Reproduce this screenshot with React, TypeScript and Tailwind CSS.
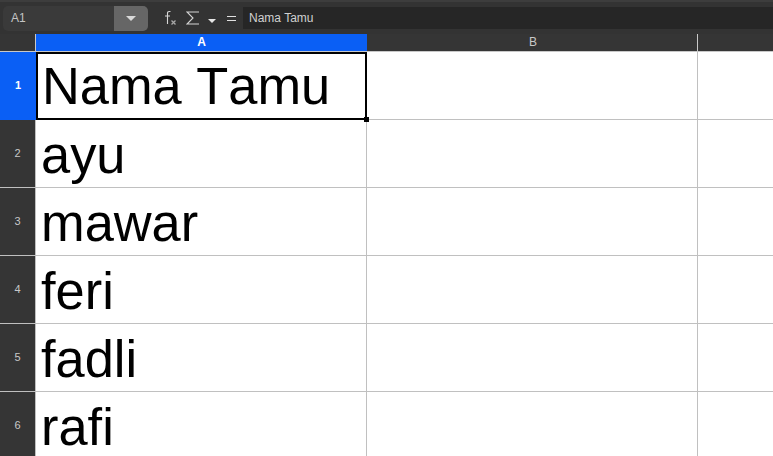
const rows = ['Nama Tamu', 'ayu', 'mawar', 'feri', 'fadli', 'rafi'];

function FormulaBar() {
  return (
    <div className="flex h-[34px] items-center border-t-2 border-[#3d3d3d] bg-[#333333] pl-[3px]">
      {/* name box */}
      <div className="flex h-[25px] w-[145px] overflow-hidden rounded-[5px] bg-[#3a3a3a]">
        <div className="flex flex-1 items-center pl-2 text-[12px] text-[#c4c4c4]">A1</div>
        <div className="flex w-[34px] items-center justify-center bg-[#666666]">
          <div className="h-0 w-0 border-x-[5px] border-t-[5px] border-x-transparent border-t-[#d9d9d9]" />
        </div>
      </div>
      {/* function icons */}
      <div className="ml-[15px] flex w-[80px] items-center text-[#d6d6d6]">
        <svg width="14" height="16" viewBox="0 0 14 16" fill="none" stroke="currentColor">
          <path d="M7.5 1.5H6.2C5 1.5 4.5 2.2 4.5 3.2V14M2 6H7" strokeWidth="1.1" />
          <path d="M8.5 10.5L12.5 14.5M12.5 10.5L8.5 14.5" strokeWidth="1.3" stroke="#a8a8a8" />
        </svg>
        <svg className="ml-[9px]" width="14" height="14" viewBox="0 0 14 14" fill="none" stroke="currentColor">
          <path d="M13 1H1L7 7L1 13H13" strokeWidth="1.1" />
        </svg>
        <div className="ml-[8px] mt-[5px] h-0 w-0 border-x-[4px] border-t-[4px] border-x-transparent border-t-[#e6e6e6]" />
        <div className="ml-[11px] flex w-[9px] flex-col gap-[3px]">
          <div className="h-px bg-[#e0e0e0]" />
          <div className="h-px bg-[#e0e0e0]" />
        </div>
      </div>
      {/* formula input */}
      <div className="flex h-[22px] flex-1 items-center bg-[#262626] pl-[6px] text-[12px] text-[#d0d0d0]">
        Nama Tamu
      </div>
    </div>
  );
}

function ColumnHeaders() {
  return (
    <div className="grid h-[18px] grid-cols-[36px_331px_331px_1fr] bg-[#353535] text-[12px] leading-[17px]">
      <div className="border-r border-b border-[#c8c8c8]" />
      <div className="border-b border-[#c8c8c8] bg-[#0a5ff5] text-center font-bold text-white">A</div>
      <div className="border-r border-b border-[#c8c8c8] pl-[2px] text-center text-[#c8c8c8]">B</div>
      <div className="border-b border-[#c8c8c8]" />
    </div>
  );
}

function SheetRow({ n, name }: { n: number; name: string }) {
  const selected = n === 1;
  return (
    <div className="grid h-[68px] grid-cols-[36px_331px_331px_1fr] grid-rows-[68px]">
      <div
        className={
          selected
            ? 'flex items-center justify-center bg-[#0a5ff5] pb-[2px] text-[11px] font-bold text-white'
            : 'flex items-center justify-center border-r border-b border-[#c0c0c0] bg-[#353535] text-[11px] text-[#c8c8c8]'
        }
      >
        {n}
      </div>
      <div
        className={
          selected
            ? 'relative border-2 border-black pl-[4px] text-[52.4px] leading-[64px] text-black [font-kerning:none]'
            : 'border-r border-b border-[#c0c0c0] pl-[5px] text-[52.4px] leading-[70px] text-black [font-kerning:none]'
        }
      >
        {name}
        {selected && <div className="absolute right-[-4px] bottom-[-4px] h-[5px] w-[5px] bg-black" />}
      </div>
      <div className="border-r border-b border-[#c0c0c0]" />
      <div className="border-b border-[#c0c0c0]" />
    </div>
  );
}

export default function App() {
  return (
    <div className="h-[456px] w-[773px] overflow-hidden bg-white font-['Liberation_Sans',Arial,sans-serif]">
      <FormulaBar />
      <ColumnHeaders />
      {rows.map((name, i) => (
        <SheetRow key={name} n={i + 1} name={name} />
      ))}
    </div>
  );
}
